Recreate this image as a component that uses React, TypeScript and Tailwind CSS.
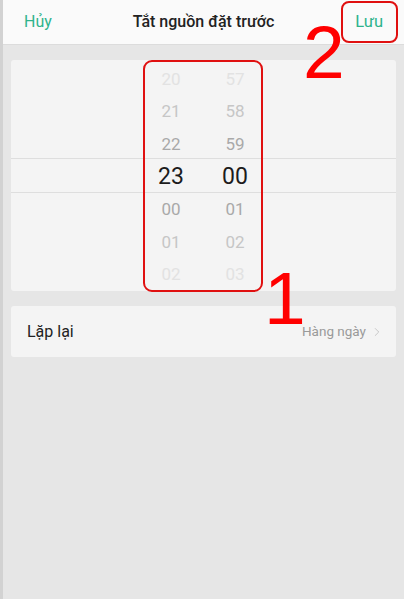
import { ChevronRight } from "lucide-react";

const hours = ["20", "21", "22", "23", "00", "01", "02"];
const minutes = ["57", "58", "59", "00", "01", "02", "03"];
const shades = [
    "text-[#e2e2e2]",
    "text-[#c6c6c6]",
    "text-[#a9a9a9]",
    "text-[#1c1c1c] text-[23px]",
    "text-[#a9a9a9]",
    "text-[#c6c6c6]",
    "text-[#e2e2e2]",
];

function Column({ values }: { values: string[] }) {
    return (
        <div className="flex flex-col w-16 items-center pt-[3px]">
            {values.map((v, i) => (
                <div
                    key={i}
                    className={`h-[33px] flex items-center justify-center text-[17px] ${shades[i]}`}
                >
                    {v}
                </div>
            ))}
        </div>
    );
}

export default function App() {
    return (
        <div
            className="relative w-[404px] h-[599px] flex bg-[#e6e6e6] overflow-hidden"
            style={{ fontFamily: "Roboto, 'Noto Sans', sans-serif" }}
        >
            <div className="w-[3px] bg-[#d2d2d2]" />
            <div className="flex-1 flex flex-col">
                {/* Header */}
                <div className="h-[45px] bg-[#fafafa] border-b border-[#dcdcdc] flex items-center justify-between pl-[21px] pr-[19px]">
                    <span className="text-[16px] text-[#2fb38c]">Hủy</span>
                    <span className="text-[16px] text-[#222] font-medium">Tắt nguồn đặt trước</span>
                    <span className="text-[16.5px] text-[#2fb38c] mr-[2px]">Lưu</span>
                </div>

                <div className="px-2 pt-[15px] flex flex-col gap-[15px]">
                    {/* Picker */}
                    <div className="relative h-[231px] bg-[#f4f4f4] rounded-[3px] flex justify-center">
                        <div className="absolute left-0 right-0 top-[98px] h-[35px] border-y border-[#dedede]" />
                        <div className="relative flex -ml-px">
                            <Column values={hours} />
                            <Column values={minutes} />
                        </div>
                    </div>

                    {/* Repeat row */}
                    <div className="h-[51px] bg-[#f4f4f4] rounded-[3px] flex items-center justify-between pl-4 pr-3">
                        <span className="text-[16px] text-[#222]">Lặp lại</span>
                        <span className="flex items-center gap-1 text-[13.5px] text-[#9a9a9a]">
                            Hàng ngày
                            <ChevronRight size={14} strokeWidth={1.2} className="text-[#b5b5b5]" />
                        </span>
                    </div>
                </div>
            </div>

            {/* annotations */}
            <div className="absolute left-[143px] top-[60px] w-[120px] h-[232px] border-2 border-[#e01010] rounded-[9px]" />
            <div className="absolute left-[341px] top-[1px] w-[57px] h-[42px] border-2 border-[#e01010] rounded-[8px]" />
            <div
                className="absolute left-[303px] top-[15px] text-[75px] leading-none text-[#ff0000]"
                style={{ fontFamily: "'Liberation Sans', Arial, sans-serif" }}
            >
                2
            </div>
            <div
                className="absolute left-[264px] top-[261px] text-[75px] leading-none text-[#ff0000]"
                style={{ fontFamily: "'Liberation Sans', Arial, sans-serif" }}
            >
                1
            </div>
        </div>
    );
}
